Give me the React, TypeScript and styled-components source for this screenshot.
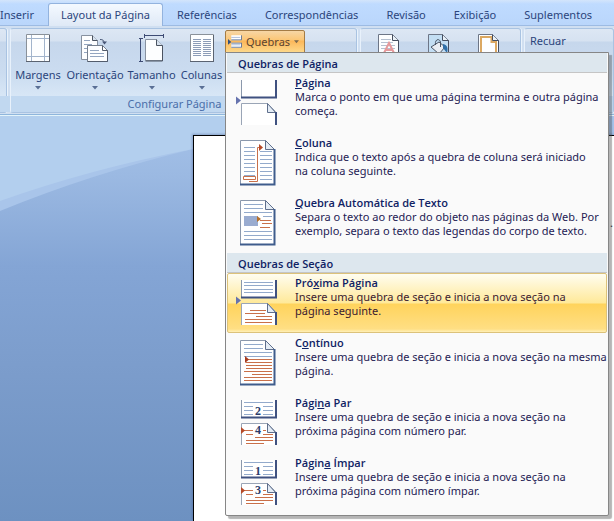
import React from "react";
import styled, { createGlobalStyle, css } from "styled-components";

const GlobalStyle = createGlobalStyle`
  * { box-sizing: border-box; }
  body {
    margin: 0;
    overflow: hidden;
    font-family: "Noto Sans", "Open Sans", sans-serif;
    font-size: 11px;
    color: #2b457c;
  }
  button { font: inherit; color: inherit; background: none; border: 0; padding: 0; margin: 0; }
  svg { display: block; }
`;

const Window = styled.div`
  display: flex;
  flex-direction: column;
  min-height: 100vh;
  background: #bfdbff;
  overflow: hidden;
`;

const Tabs = styled.nav`
  display: flex;
  height: 26px;
  padding-top: 3px;
  margin-left: -14px;
  background: linear-gradient(#d3e5fb, #bfdbff 4px, #bad6fb);
  border-bottom: 1px solid #9dbbe3;
`;

const Tab = styled.button<{ $active?: boolean }>`
  flex: none;
  height: 23px;
  padding: 0 14px;
  line-height: 23px;
  white-space: nowrap;
  border-radius: 3px 3px 0 0;
  ${(p) =>
    p.$active &&
    css`
      padding: 0 12px;
      background: linear-gradient(#f4f9ff, #dfe9f6);
      border: 1px solid #93b3de;
      border-bottom: 0;
      line-height: 22px;
    `}
`;

const Ribbon = styled.div`
  position: relative;
  z-index: 1;
  display: flex;
  gap: 3px;
  height: 90px;
  padding: 2px 0;
  background: #d0dff1;
  border-bottom: 1px solid #e4f4fa;
  box-shadow: 0 -1px 0 #8fb6dc inset;
`;

const Group = styled.section<{ $kind: "edge" | "setup" | "background" | "last" }>`
  display: flex;
  flex: none;
  flex-direction: column;
  height: 85px;
  border: 1px solid #a9c3e2;
  border-left-color: #e8f1fb;
  border-radius: 3px;
  box-shadow: 1px 0 0 #eaf3fc;
  background: linear-gradient(#dde7f4, #d6e2f1 12px, #c6d7ec 13px, #cbdcf0 45px, #d8e7f6 68px);
  width: ${(p) =>
    ({ edge: "7px", setup: "347px", background: "161px", last: "auto" })[p.$kind]};
  ${(p) => p.$kind === "edge" && "border-left: 0; border-radius: 0 3px 3px 0;"}
  ${(p) => p.$kind === "last" && "flex: 1 0 auto;"}
`;

const GroupBody = styled.div`
  display: flex;
  flex: 1;
  align-items: flex-start;
`;

const GroupLabel = styled.div`
  height: 16px;
  padding-right: 18px;
  line-height: 16px;
  text-align: center;
  color: #4a6ea9;
  background: #c1d8f0;
`;

const BigButton = styled.button<{ $width: number }>`
  display: flex;
  flex-direction: column;
  align-items: center;
  width: ${(p) => p.$width}px;
  padding-top: 4px;
  line-height: 16px;
  white-space: nowrap;
`;

const ButtonLabel = styled.span`
  margin: 4px 0 3px;
`;

const GalleryRow = styled.div`
  display: flex;
  gap: 26px;
  padding: 4px 0 0 16px;
`;

const SplitArea = styled.div`
  position: relative;
  padding-top: 1px;
`;

const BreaksButton = styled.button`
  display: flex;
  align-items: center;
  gap: 4px;
  width: 80px;
  height: 23px;
  padding: 0 5px 0 2px;
  color: #5b4430;
  border: 1px solid #a57c45;
  border-radius: 2px 2px 0 0;
  background: linear-gradient(#f7d6a6, #fbc675 9px, #fbb75a 10px, #fdd88a);
`;

const FieldLabel = styled.span`
  padding: 4px 0 0 5px;
  line-height: 16px;
`;

const Menu = styled.div`
  position: absolute;
  top: 23px;
  left: 0;
  z-index: 5;
  width: 384px;
  padding: 0 1px 2px;
  background: #fafafa;
  border: 1px solid #868686;
  border-radius: 0 0 2px 2px;
  box-shadow: 3px 3px 1px rgba(70, 70, 70, 0.4);
`;

const MenuHeading = styled.h2`
  height: 20px;
  margin: 0;
  padding-left: 11px;
  font-family: "Open Sans", "Noto Sans", sans-serif;
  font-size: 11px;
  line-height: 21px;
  font-weight: 600;
  color: #0f2264;
  background: #dde7ee;
  border-bottom: 1px solid #c5c5c5;
`;

const MenuItem = styled.button<{ $hot?: boolean }>`
  display: grid;
  grid-template-columns: 60px 1fr;
  width: 100%;
  height: 60px;
  padding: 2px 0 0 7px;
  text-align: left;
  color: #251a54;
  border: 1px solid transparent;
  border-radius: 2px;
  ${(p) =>
    p.$hot &&
    css`
      color: #3b1a30;
      border-color: #dcc27a;
      background: linear-gradient(#fffdf0, #ffe999 29px, #ffd35c 30px, #ffdf84 55px, #fff0b8);
    `}
`;

const ItemIcon = styled.span`
  padding-top: 2px;
`;

const ItemText = styled.span`
  display: block;
  line-height: 14px;
  white-space: nowrap;
`;

const ItemTitle = styled.strong`
  display: block;
  font-family: "Open Sans", "Noto Sans", sans-serif;
  font-weight: 600;
  color: #0f2264;
`;

const Line = styled.span`
  display: block;
`;

const Workspace = styled.main`
  position: relative;
  display: flex;
  flex: 1;
  padding: 19px 0 0 193px;
  background: linear-gradient(#a6c3ea, #9bb9e2 60px, #84a5d5 150px, #7b9ccb 260px, #6d91c1);
`;

const Swoosh = styled.svg`
  position: absolute;
  top: 0;
  left: 0;
`;

const Sheet = styled.article`
  position: relative;
  flex: 1;
  padding: 79px 1px 0 0;
  text-align: right;
  color: #222;
  background: #fff;
  border: solid #000;
  border-width: 1px 0 0 1px;
  box-shadow: -1px -1px 2px rgba(70, 90, 140, 0.4);
`;

const Caret = ({ color = "#5a6f95" }: { color?: string }) => (
  <svg width="6" height="4" viewBox="0 0 6 4" aria-hidden="true">
    <path d="M0 0h6L3 3.6z" fill={color} />
  </svg>
);

const MarginsIcon = () => (
  <svg width="26" height="30" viewBox="0 0 26 30">
    <path d="M1.500 1.500h23v27h-23z" fill="#fdfeff" stroke="#8a9199" />
    <path d="M24.500 2v27M1 28.500h24" stroke="#5b6371" />
    <path d="M6.500 2v26M19.500 2v26M2 5.500h22M2 23.500h22" stroke="#a2b4cc" />
  </svg>
);

const OrientationIcon = () => (
  <svg width="30" height="30" viewBox="0 0 30 30">
    <path d="M1.500 2.500h11l5 5v19h-16z" fill="#fdfeff" stroke="#8791a0" />
    <path d="M12.500 2.500v5h5" fill="#d6e1ee" stroke="#4b5361" />
    <path d="M4 7.500h6M4 11.500h8M4 15.500h4M4 19.500h3" stroke="#93a5c0" />
    <path d="M7.500 12.500h15l5 5v11h-20z" fill="#fdfeff" stroke="#76808f" />
    <path d="M22.500 12.500v5h5v11h-20" fill="none" stroke="#535c6c" />
    <path d="M10 17.500h9M10 20.500h14M10 23.500h14" stroke="#93a5c0" />
    <path d="M20 6.500c3 0 4 1 4 3" fill="none" stroke="#4a5878" />
    <path d="M22 8.500h5l-2.500 3z" fill="#4a5878" />
  </svg>
);

const SizeIcon = () => (
  <svg width="28" height="30" viewBox="0 0 28 30">
    <path d="M7 2.500h18M6.500 1v4M25.500 1v4M2.500 6v22M1 5.500h4M1 28.500h4" stroke="#3d4b74" />
    <path d="M7.500 6.500h11l6 6v15h-17z" fill="#fdfeff" stroke="#8791a0" />
    <path d="M18.500 6.500v6h6v15.500h-17" fill="none" stroke="#4b5361" />
    <path d="M19 7l5 5h-5z" fill="#d6e1ee" />
  </svg>
);

const ColumnsIcon = () => (
  <svg width="26" height="30" viewBox="0 0 26 30">
    <path d="M1.500 1.500h23v27h-23z" fill="#fdfeff" stroke="#8a9199" />
    <path d="M24.500 2v27M1 28.500h24" stroke="#5b6371" />
    {[6, 8, 10, 12, 14, 16, 18, 20, 22].map((y) => (
      <path key={y} d={`M4 ${y}.500h8M14 ${y}.500h8`} stroke="#8d9db8" />
    ))}
  </svg>
);

const BreaksIcon = () => (
  <svg width="17" height="17" viewBox="0 0 17 17" aria-hidden="true">
    <path d="M4 1h12v6H4zM4 10h12v6H4z" fill="#fff" />
    <path d="M4 3.500h11M4 12.500h11" stroke="#9db0cf" />
    <path d="M4 6.500h12.500V1M4 15.500h12.500V10M4 10.500h12" fill="none" stroke="#4b6796" />
    <path d="M0 5.500l4 3.500-4 3.500z" fill="#32507f" />
  </svg>
);

const GalleryIcon = ({ kind }: { kind: "mark" | "fill" | "border" }) => (
  <svg width="24" height="30" viewBox="0 0 24 30">
    <path
      d="M1.500 1.500h14l6 6v21h-20z"
      fill={kind === "fill" ? "#c3def3" : "#fdfeff"}
      stroke="#6d7687"
    />
    {kind === "mark" && (
      <>
        <path d="M4 6.500h10M4 9.500h12M4 12.500h14M4 15.500h14" stroke="#b5c0d0" />
        <path d="M6 22l6-12 6 12M8 17h8" fill="none" stroke="#e5999b" strokeWidth="2" />
      </>
    )}
    {kind === "fill" && (
      <>
        <path d="M4 14l8-5 6 5-6 7z" fill="#e8edf3" stroke="#4a5565" />
        <path d="M8.500 12c-1-6 4-7 5-3v5" fill="none" stroke="#4a5565" />
        <path d="M16 11c5 1 5 5 4 9l-4-5z" fill="#2f6fa8" />
      </>
    )}
    {kind === "border" && (
      <path d="M4 28V4h10.500v5H19v19" fill="none" stroke="#dba862" strokeWidth="2" />
    )}
    <path d="M15.500 1.500v6h6V28" fill="none" stroke="#454e60" />
    <path d="M16 2.500l4.500 4.500H16z" fill="#e9f0f7" />
  </svg>
);

const BLUE = "#93aacb";
const RED = "#c9704a";

const rules = (ys: number[], x1: number, x2: number) =>
  ys.map((y) => `M${x1} ${y}.5H${x2}`).join("");

const WholePage = ({ children }: { children: React.ReactNode }) => (
  <svg width="48" height="50" viewBox="0 0 48 50" aria-hidden="true">
    <path d="M5.500 2.500h25l9 9v35h-34z" fill="#fff" stroke="#8b98ac" />
    {children}
    <path d="M30.500 2.500l9 9h-9z" fill="#e4ecf5" stroke="#5f6f8c" />
    <path d="M39.500 11v35.500H5" fill="none" stroke="#3f5c8c" strokeWidth="2" />
  </svg>
);

const SplitPage = ({
  arrow,
  top,
  bottom,
}: {
  arrow?: boolean;
  top?: React.ReactNode;
  bottom?: React.ReactNode;
}) => (
  <svg width="48" height="50" viewBox="0 0 48 50" aria-hidden="true">
    <path d="M6 2h35v18H6z" fill="#fff" />
    <path d="M6.500 2v18" stroke="#8b98ac" />
    {top}
    <path d="M6 19.500h35V2" fill="none" stroke="#3f5180" strokeWidth="2" />
    <path d="M6.500 47V25.500h26l8 8V47" fill="#fff" stroke="#9aa5b6" />
    {bottom}
    <path d="M32.500 25.500l8 9h-8z" fill="#e4ecf5" stroke="#5f6f8c" />
    <path d="M41 34v13" stroke="#3f5180" strokeWidth="2" />
    {arrow && <path d="M1 18.500l5 4-5 4z" fill="#6673ae" />}
  </svg>
);

const Digit = styled.text`
  font: 700 12px "Liberation Serif", serif;
  fill: #2b3c6b;
`;

const NumberedPages = ({ upper, lower }: { upper: string; lower: string }) => (
  <SplitPage
    top={
      <>
        <path d={rules([4, 8, 12, 16], 9, 38)} stroke={BLUE} />
        <path d="M18 8h10v9H18z" fill="#fff" />
        <Digit x="23" y="17" textAnchor="middle">{upper}</Digit>
      </>
    }
    bottom={
      <>
        <path
          d={rules([32], 6, 31) + rules([36, 42], 11, 38) + rules([39], 20, 38) + rules([45], 11, 29)}
          stroke={RED}
        />
        <path d="M6 29l4 3.500-4 3.500z" fill="#b64b2a" />
        <path d="M18 28h10v9H18z" fill="#fff" />
        <Digit x="23" y="36" textAnchor="middle">{lower}</Digit>
      </>
    }
  />
);

const ColumnBreakIcon = () => (
  <WholePage>
    <path d={rules([9, 13, 17, 21, 25, 29, 33, 37, 41], 9, 20)} stroke={BLUE} />
    <path d={rules([13, 17, 21, 25, 29, 33, 37, 41], 25, 37)} stroke={BLUE} />
    <path d="M8.500 38.500h12v3h-12zM14 43.500h8.500V9.500h4" fill="none" stroke={RED} />
    <path d="M24 6l4 3.500-4 3.500z" fill="#b64b2a" />
  </WholePage>
);

const WrapBreakIcon = () => (
  <WholePage>
    <path
      d={rules([6, 10], 9, 28) + rules([14, 33, 37, 41], 9, 37) + rules([18], 28, 37)}
      stroke={BLUE}
    />
    <path d="M9 18h14v10H9z" fill="#9aacd0" />
    <path d="M25 22.500h11M27 25.500h10M25 29.500h10" stroke={RED} />
    <path d="M22 18l4 3-4 3z" fill="#b6702a" />
  </WholePage>
);

const NextPageIcon = () => (
  <SplitPage
    arrow
    top={<path d={rules([4, 7, 11, 14], 9, 38)} stroke={BLUE} />}
    bottom={
      <path
        d={rules([32], 15, 31) + rules([35], 10, 30) + rules([38], 21, 37) + rules([41, 44], 10, 37)}
        stroke={RED}
      />
    }
  />
);

const ContinuousIcon = () => (
  <WholePage>
    <path d={rules([6, 10], 9, 28) + rules([14, 18], 9, 37)} stroke={BLUE} />
    <path
      d={rules([21, 24, 27, 30], 11, 37) + rules([33, 39, 42], 9, 37) + rules([36], 17, 37)}
      stroke={RED}
    />
    <path d="M10 18l4 3.500-4 3.500z" fill="#a83c20" />
  </WholePage>
);

type Item = {
  title: [string, string, string];
  lines: string[];
  icon: React.ReactNode;
  hot?: boolean;
};

const sections: { heading: string; items: Item[] }[] = [
  {
    heading: "Quebras de Página",
    items: [
      {
        title: ["", "P", "ágina"],
        lines: ["Marca o ponto em que uma página termina e outra página", "começa."],
        icon: <SplitPage arrow />,
      },
      {
        title: ["", "C", "oluna"],
        lines: ["Indica que o texto após a quebra de coluna será iniciado", "na coluna seguinte."],
        icon: <ColumnBreakIcon />,
      },
      {
        title: ["", "Q", "uebra Automática de Texto"],
        lines: [
          "Separa o texto ao redor do objeto nas páginas da Web. Por",
          "exemplo, separa o texto das legendas do corpo de texto.",
        ],
        icon: <WrapBreakIcon />,
      },
    ],
  },
  {
    heading: "Quebras de Seção",
    items: [
      {
        title: ["Pró", "x", "ima Página"],
        lines: ["Insere uma quebra de seção e inicia a nova seção na", "página seguinte."],
        icon: <NextPageIcon />,
        hot: true,
      },
      {
        title: ["C", "o", "ntínuo"],
        lines: ["Insere uma quebra de seção e inicia a nova seção na mesma", "página."],
        icon: <ContinuousIcon />,
      },
      {
        title: ["Pági", "n", "a Par"],
        lines: [
          "Insere uma quebra de seção e inicia a nova seção na",
          "próxima página com número par.",
        ],
        icon: <NumberedPages upper="2" lower="4" />,
      },
      {
        title: ["Págin", "a", " Ímpar"],
        lines: [
          "Insere uma quebra de seção e inicia a nova seção na",
          "próxima página com número ímpar.",
        ],
        icon: <NumberedPages upper="1" lower="3" />,
      },
    ],
  },
];

const tabs = [
  "Inserir",
  "Layout da Página",
  "Referências",
  "Correspondências",
  "Revisão",
  "Exibição",
  "Suplementos",
];

const setupButtons = [
  { label: "Margens", icon: <MarginsIcon />, width: 54 },
  { label: "Orientação", icon: <OrientationIcon />, width: 60 },
  { label: "Tamanho", icon: <SizeIcon />, width: 53 },
  { label: "Colunas", icon: <ColumnsIcon />, width: 47 },
];

const BreaksMenu = () => (
  <Menu role="menu">
    {sections.map((section) => (
      <React.Fragment key={section.heading}>
        <MenuHeading>{section.heading}</MenuHeading>
        {section.items.map((item) => (
          <MenuItem key={item.title.join("")} role="menuitem" $hot={item.hot}>
            <ItemIcon>{item.icon}</ItemIcon>
            <ItemText>
              <ItemTitle>
                {item.title[0]}
                <u>{item.title[1]}</u>
                {item.title[2]}
              </ItemTitle>
              {item.lines.map((line) => (
                <Line key={line}>{line}</Line>
              ))}
            </ItemText>
          </MenuItem>
        ))}
      </React.Fragment>
    ))}
  </Menu>
);

export default function App() {
  return (
    <Window>
      <GlobalStyle />
      <Tabs>
        {tabs.map((tab) => (
          <Tab key={tab} $active={tab === "Layout da Página"}>
            {tab}
          </Tab>
        ))}
      </Tabs>
      <Ribbon>
        <Group $kind="edge">
          <GroupBody />
          <GroupLabel />
        </Group>
        <Group $kind="setup">
          <GroupBody>
            {setupButtons.map((b) => (
              <BigButton key={b.label} $width={b.width}>
                {b.icon}
                <ButtonLabel>{b.label}</ButtonLabel>
                <Caret />
              </BigButton>
            ))}
            <SplitArea>
              <BreaksButton aria-haspopup="menu" aria-expanded="true">
                <BreaksIcon />
                Quebras
                <Caret color="#7d6a4f" />
              </BreaksButton>
              <BreaksMenu />
            </SplitArea>
          </GroupBody>
          <GroupLabel>Configurar Página</GroupLabel>
        </Group>
        <Group $kind="background">
          <GroupBody>
            <GalleryRow>
              <GalleryIcon kind="mark" />
              <GalleryIcon kind="fill" />
              <GalleryIcon kind="border" />
            </GalleryRow>
          </GroupBody>
          <GroupLabel />
        </Group>
        <Group $kind="last">
          <GroupBody>
            <FieldLabel>Recuar</FieldLabel>
          </GroupBody>
          <GroupLabel />
        </Group>
      </Ribbon>
      <Workspace>
        <Swoosh width="614" height="100" viewBox="0 0 614 100" aria-hidden="true">
          <path d="M0 0H614V0Q340 -5 193 33Q90 58 0 95z" fill="#a9c5ea" />
          <path d="M0 0H614V0Q340 -5 193 33Q90 53 0 85z" fill="#b3cfee" />
        </Swoosh>
        <Sheet>.</Sheet>
      </Workspace>
    </Window>
  );
}
